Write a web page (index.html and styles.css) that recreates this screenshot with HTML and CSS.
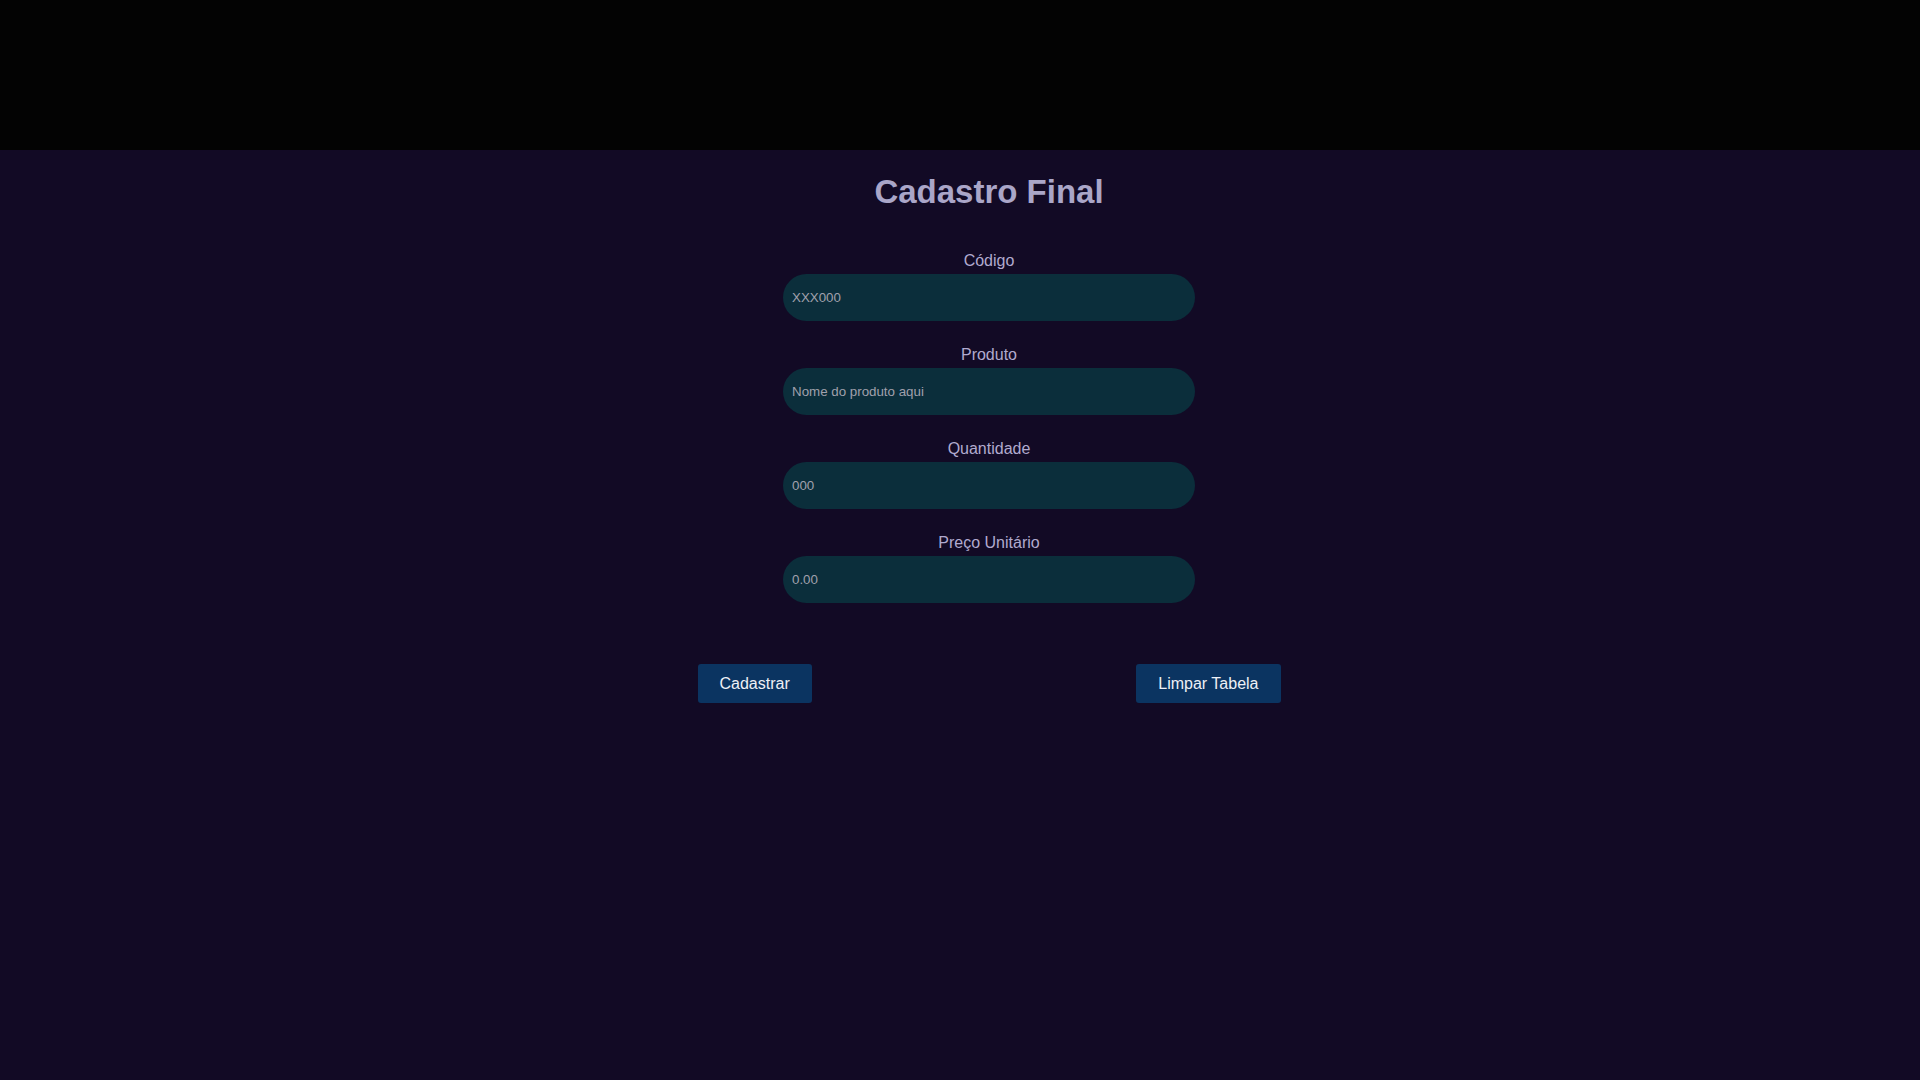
FILE: index.html
```html
<!DOCTYPE html>
<html lang="pt-BR">
<head>
<meta charset="utf-8">
<title>Cadastro Final</title>
<link rel="stylesheet" href="styles.css">
</head>
<body>
<header class="topbar"></header>
<main class="page">
  <section class="card">
    <h1 class="title">Cadastro Final</h1>
    <form class="form">
      <div class="field">
        <label class="label" for="codigo">Código</label>
        <input class="input" id="codigo" type="text" placeholder="XXX000">
      </div>
      <div class="field">
        <label class="label" for="produto">Produto</label>
        <input class="input" id="produto" type="text" placeholder="Nome do produto aqui">
      </div>
      <div class="field">
        <label class="label" for="quantidade">Quantidade</label>
        <input class="input" id="quantidade" type="text" placeholder="000">
      </div>
      <div class="field">
        <label class="label" for="preco">Preço Unitário</label>
        <input class="input" id="preco" type="text" placeholder="0.00">
      </div>
      <div class="actions">
        <button class="btn" type="button">Cadastrar</button>
        <button class="btn" type="button">Limpar Tabela</button>
      </div>
    </form>
  </section>
</main>
</body>
</html>
```
FILE: styles.css
```css
* { box-sizing: border-box; }

html, body {
  margin: 0;
  padding: 0;
  height: 100%;
}

body {
  background: #120a25;
  font-family: "Liberation Sans", Arial, sans-serif;
  overflow: hidden;
}

.topbar {
  height: 150px;
  background: #030303;
}

.page {
  display: flex;
  justify-content: center;
  padding-left: 58px;
}

.card {
  width: 583px;
  display: flex;
  flex-direction: column;
  align-items: center;
}

.title {
  margin: 23px 0 0;
  font-size: 33px;
  font-weight: bold;
  line-height: 37px;
  color: #aaa6c8;
}

.form {
  width: 100%;
  margin-top: 42px;
  display: flex;
  flex-direction: column;
  align-items: center;
}

.field {
  width: 412px;
  display: flex;
  flex-direction: column;
  align-items: center;
  margin-bottom: 25px;
}

.label {
  font-size: 16px;
  line-height: 18px;
  color: #b1aacf;
  margin-bottom: 4px;
}

.input {
  width: 412px;
  height: 47px;
  border: none;
  outline: none;
  border-radius: 24px;
  background: #0b2e3b;
  padding: 0 9px;
  font-family: "Liberation Sans", Arial, sans-serif;
  font-size: 13.33px;
  color: #c8c8d0;
}

.input::placeholder {
  color: #a0a0ac;
}

.actions {
  width: 100%;
  display: flex;
  justify-content: space-between;
  margin-top: 36px;
}

.btn {
  background: #0b3461;
  color: #eef0f6;
  border: none;
  border-radius: 3px;
  padding: 10px 22px;
  font-family: "Liberation Sans", Arial, sans-serif;
  font-size: 16px;
  line-height: 19px;
  cursor: pointer;
}
```
